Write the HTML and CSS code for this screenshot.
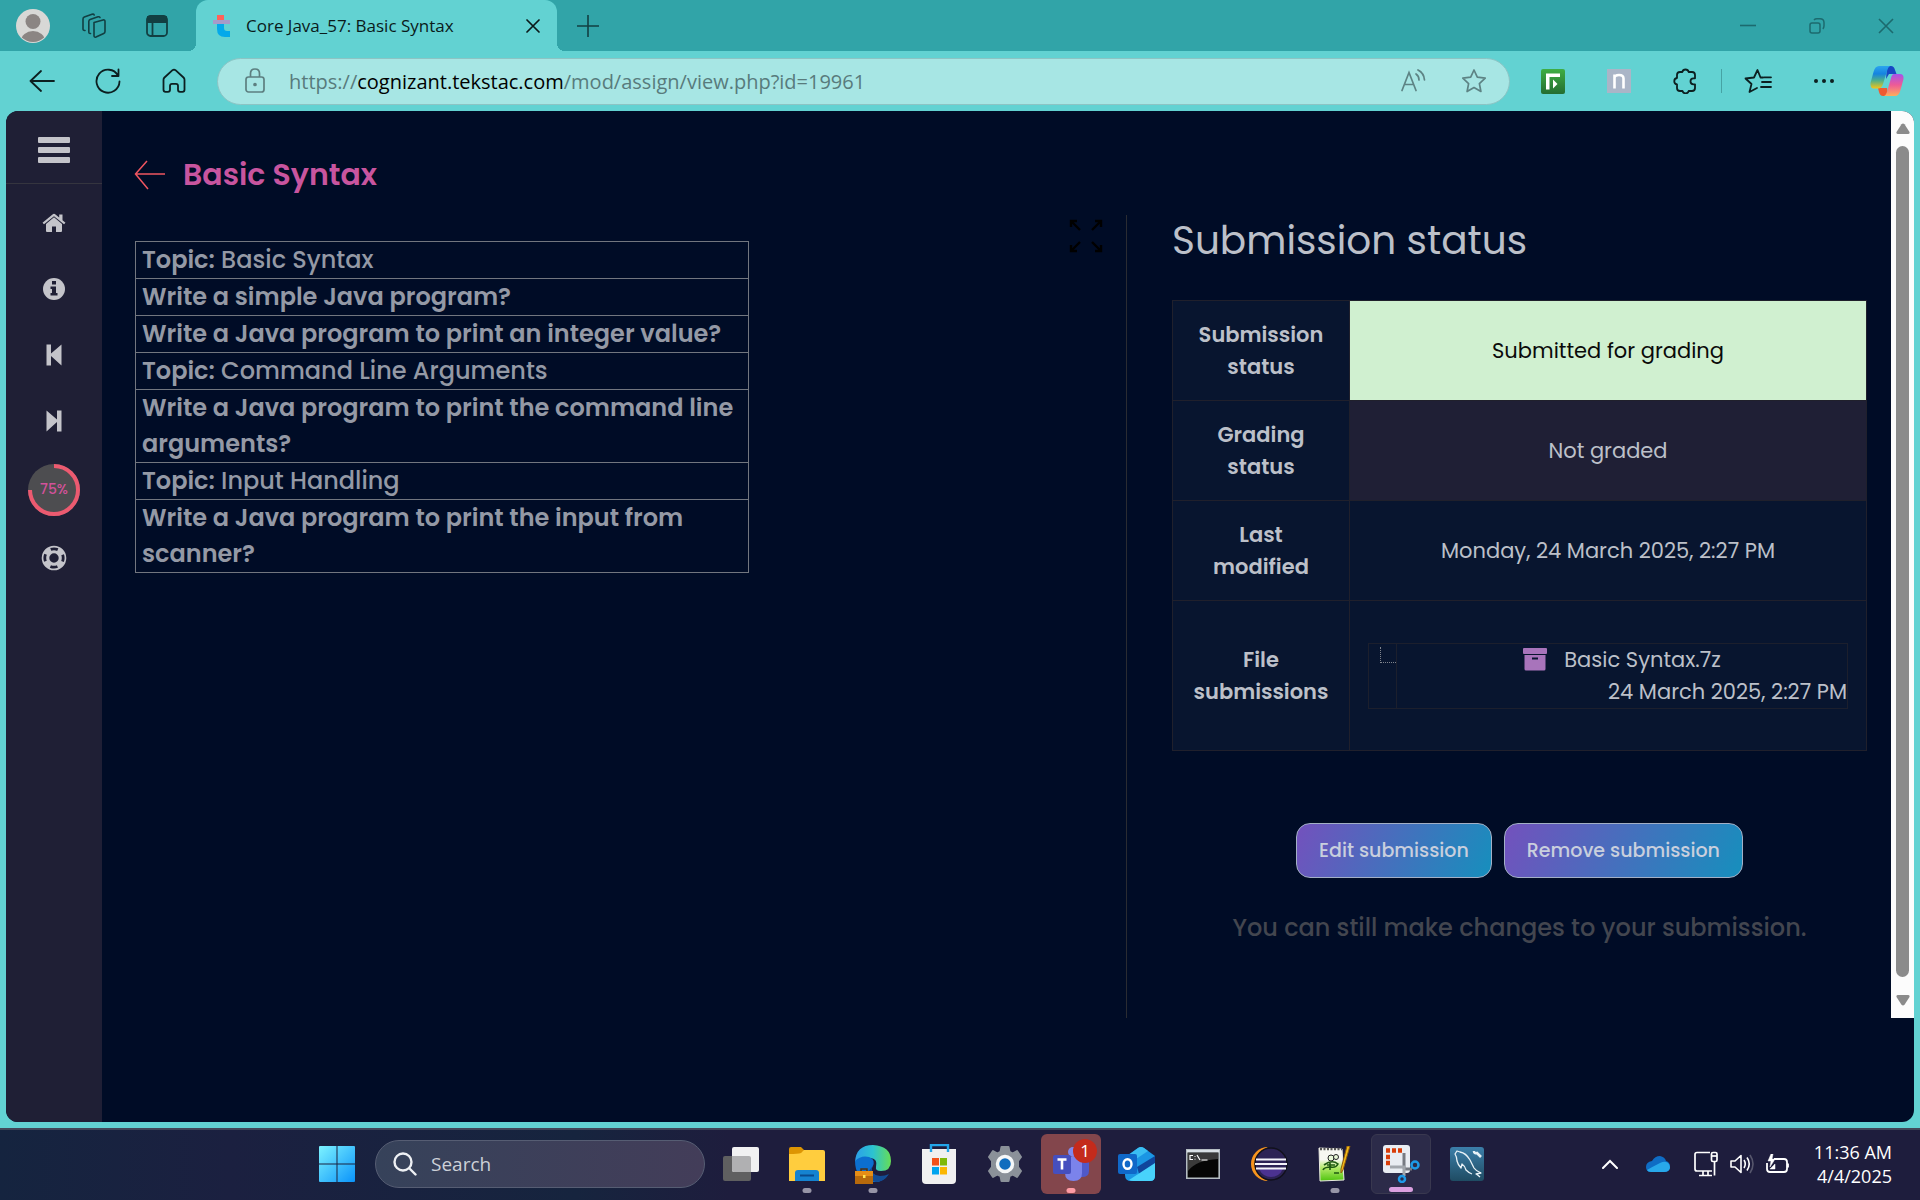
FILE: index.html
```html
<!DOCTYPE html>
<html lang="en">
<head>
<meta charset="utf-8">
<title>Core Java_57: Basic Syntax</title>
<link rel="stylesheet" href="styles.css">
</head>
<body>
<header class="browser">
  <div class="tabstrip">
    <button class="strip-btn profile" aria-label="Profile"><svg width="34" height="34" viewBox="0 0 34 34"><defs><clipPath id="av"><circle cx="17" cy="17" r="16"/></clipPath></defs><circle cx="17" cy="17" r="17" fill="#d8d8d6"/><g clip-path="url(#av)" fill="#8b8583"><circle cx="17" cy="12.500" r="7.500"/><ellipse cx="17" cy="32" rx="12" ry="10"/></g></svg></button>
    <button class="strip-btn" aria-label="Workspaces"><svg width="26" height="26" viewBox="0 0 26 26" fill="none" stroke="#123f42" stroke-width="1.600" stroke-linejoin="round" stroke-linecap="round"><path d="M13 9.500 22 7q2-.5 2 1.500v10q0 1.500-1.300 2L15 24q-2 .7-2-1.500z"/><path d="M9.500 20.500q-1.700.3-1.700-1.500V8.500q0-1.500 1.300-2L17 3.800q1.500-.4 2 .7M4 17.500q-2 .2-2-1.600V6q0-1.500 1.300-2L11 1.300q1.700-.5 2.200.7"/></svg></button>
    <button class="strip-btn" aria-label="Tab actions"><svg width="24" height="24" viewBox="0 0 24 24" fill="none" stroke="#123f42" stroke-width="1.800"><rect x="2" y="2" width="20" height="20" rx="3.500"/><path d="M2 8h20M7.500 8v14"/><path d="M3 3h18v4.500H3z" fill="#123f42"/></svg></button>
    <div class="tab">
      <svg width="18" height="22" viewBox="0 0 18 22"><path d="M4 0h7v5H4z" fill="#ff6259"/><path d="M4 9h7v4q0 3 3 3h3v6h-5q-8 0-8-8z" fill="#04a9ea"/><path d="M0 5h17v4H0z" fill="#a79bc9"/></svg>
      <span class="tab-title">Core Java_57: Basic Syntax</span>
      <button class="tab-close" aria-label="Close tab"><svg width="14" height="14" viewBox="0 0 14 14" stroke="#0a1a1a" stroke-width="1.700" stroke-linecap="round"><path d="m1 1 12 12M13 1 1 13"/></svg></button>
    </div>
    <button class="new-tab" aria-label="New tab"><svg width="22" height="22" viewBox="0 0 22 22" stroke="#123f42" stroke-width="1.600"><path d="M11 0v22M0 11h22"/></svg></button>
    <div class="window-controls">
      <button aria-label="Minimize"><svg width="16" height="16" viewBox="0 0 16 16" stroke="#1c6a6e" stroke-width="1.600"><path d="M0 7.500h16"/></svg></button>
      <button aria-label="Restore"><svg width="16" height="16" viewBox="0 0 16 16" fill="none" stroke="#1c6a6e" stroke-width="1.500"><rect x="1" y="5" width="10" height="10" rx="2"/><path d="M5 2q1-1.200 3-1.200h3q4 0 4 4v3q0 2-1.200 3"/></svg></button>
      <button aria-label="Close"><svg width="16" height="16" viewBox="0 0 16 16" stroke="#1c6a6e" stroke-width="1.600"><path d="m1 1 14 14M15 1 1 15"/></svg></button>
    </div>
  </div>
  <div class="toolbar">
    <button class="tool" aria-label="Back"><svg width="26" height="22" viewBox="0 0 26 22" fill="none" stroke="#0c1f20" stroke-width="1.800" stroke-linecap="round" stroke-linejoin="round"><path d="M12 1 1.500 11 12 21M1.500 11H25"/></svg></button>
    <button class="tool" aria-label="Refresh"><svg width="26" height="26" viewBox="0 0 26 26" fill="none" stroke="#0c1f20" stroke-width="1.800" stroke-linecap="round" stroke-linejoin="round"><path d="M24.500 13.500A11.500 11.500 0 1 1 23 7.500M23.500 1.500v6.500h-6.500"/></svg></button>
    <button class="tool" aria-label="Home"><svg width="24" height="26" viewBox="0 0 24 26" fill="none" stroke="#0c1f20" stroke-width="1.800" stroke-linejoin="round"><path d="M10.500 2.200q1.500-1.200 3 0l8 7.300q1 1 1 2.300v10q0 2-2 2h-2.500q-2 0-2-2v-4q0-2-2-2h-4q-2 0-2 2v4q0 2-2 2H3.500q-2 0-2-2v-10q0-1.300 1-2.300z"/></svg></button>
    <div class="address">
      <svg class="lock" width="20" height="26" viewBox="0 0 20 26" fill="none" stroke="#5d7f80" stroke-width="1.700"><rect x="1" y="9" width="18" height="15" rx="2.500"/><path d="M5.500 9V5.500q0-4.500 4.500-4.500t4.500 4.500V9"/><circle cx="10" cy="16.500" r="1" fill="#5d7f80"/></svg>
      <div class="url" role="textbox" aria-label="Address">https://<span class="host">cognizant.tekstac.com</span>/mod/assign/view.php?id=19961</div>
      <button class="in-bar" aria-label="Read aloud"><svg width="26" height="24" viewBox="0 0 26 24" fill="none" stroke="#5d8384" stroke-width="1.700" stroke-linecap="round"><path d="m1 21.500 7-18 7 18M3.500 15.500h9M15 5q3 2 3 6M17 1q6 3 6.500 10"/></svg></button>
      <button class="in-bar" aria-label="Add to favorites"><svg width="26" height="26" viewBox="0 0 26 26" fill="none" stroke="#5d8384" stroke-width="1.700" stroke-linejoin="round"><path d="m13 2 3.300 7.200 7.900 1-5.800 5.400 1.500 7.900-6.900-3.900-6.900 3.900 1.500-7.900-5.800-5.400 7.900-1z"/></svg></button>
    </div>
    <button class="tool" aria-label="Form extension"><svg width="24" height="25" viewBox="0 0 24 25"><defs><linearGradient id="gr" x2="0" y2="1"><stop stop-color="#3fae45"/><stop offset="1" stop-color="#246d31"/></linearGradient></defs><rect width="24" height="25" rx="2" fill="url(#gr)"/><path d="M5 4.500h14V8H8.500v12.500H5z" fill="#fff"/><path d="m12 10.500 4.500 4.500-4.500 4.500z" fill="#fff"/></svg></button>
    <button class="tool" aria-label="n extension"><svg width="24" height="24" viewBox="0 0 24 24"><path d="M0 0h24v24H0z" fill="#aab5c7"/><path d="M7.500 19.500V5.500M7.500 9q0-3 4.500-3t4.500 3.500v10" fill="none" stroke="#fff" stroke-width="2.600"/></svg></button>
    <button class="tool" aria-label="Extensions"><svg width="24" height="26" viewBox="0 0 24 26" fill="none" stroke="#0c1f20" stroke-width="1.800" stroke-linejoin="round"><path d="M9.300 4a3.300 3.300 0 0 1 6.400 0H19q3 0 3 3v3.300h-1.500a3 3 0 0 0 0 6H22V20q0 3-3 3h-3.300a3.200 3.200 0 0 1-6.200 0H7q-3 0-3-3v-3.500a3.300 3.300 0 0 1 0-6.500V7q0-3 3-3z"/></svg></button>
    <span class="divider"></span>
    <button class="tool" aria-label="Favorites"><svg width="28" height="26" viewBox="0 0 28 26" fill="none" stroke="#0c1f20" stroke-width="1.800" stroke-linejoin="round" stroke-linecap="round"><path d="M19 9.500h-2.500L13.500 2l-3.500 7.500-8.500 1 6 5.500-2 8 7.500-4M18 14h9M17 19h10M20 9.300h7"/></svg></button>
    <button class="tool" aria-label="Settings and more"><svg width="22" height="6" viewBox="0 0 22 6" fill="#0c1f20"><circle cx="3" cy="3" r="2"/><circle cx="11" cy="3" r="2"/><circle cx="19" cy="3" r="2"/></svg></button>
    <button class="tool copilot" aria-label="Copilot"><svg width="34" height="32" viewBox="0 0 34 32"><defs><linearGradient id="c1" x2="0" y2="1"><stop stop-color="#2ba5ee"/><stop offset=".35" stop-color="#1583e0"/><stop offset=".65" stop-color="#4fb08a"/><stop offset="1" stop-color="#f6c516"/></linearGradient><linearGradient id="c2" x2="0" y2="1"><stop stop-color="#a553ea"/><stop offset=".5" stop-color="#ee5b96"/><stop offset="1" stop-color="#ffae5c"/></linearGradient></defs><path d="M17 1h4q3 0 4 4l1.500 4H19l-3 5z" fill="#1748c4"/><path d="M8 23h9l1 8h-5q-3 0-4-4z" fill="#ef5a32"/><path d="M9 1h11q-2 1-3 5l-4 13q-1.500 4.500-5 4.500H4Q0 23.500.5 18L3.500 7Q5 1 9 1z" fill="url(#c1)"/><path d="M24 9h6q4 0 3.500 5l-3 11q-1.500 6-5.500 6H14q2-1 3-4l4-14q1-4 3-4z" fill="url(#c2)"/></svg></button>
  </div>
</header>

<div class="frame">
  <div class="viewport">
    <nav class="sidebar" aria-label="Course">
      <div class="menu-row"><button aria-label="Menu"><svg width="32" height="26" viewBox="0 0 32 26" fill="#c4c4ca"><rect width="32" height="6" rx="1"/><rect y="10" width="32" height="6" rx="1"/><rect y="20" width="32" height="6" rx="1"/></svg></button></div>
      <a href="#home" aria-label="Home"><svg width="24" height="20" viewBox="0 0 24 20" fill="#c4c4ca"><path d="M12 4.200 20 11v7q0 1-1 1h-5v-5.500h-4V19H5q-1 0-1-1v-7z"/><path d="M12 .8q-.8 0-1.500.6L.5 9.800 2 11.300 12 3.200l10 8.100 1.500-1.500-3-2.600V1.500h-3.300v3L13.500 1.400Q12.800.8 12 .8z"/></svg></a>
      <a href="#info" aria-label="Information"><svg width="22" height="22" viewBox="0 0 22 22"><circle cx="11" cy="11" r="11" fill="#c4c4ca"/><path d="M9 3h4v3.500H9zM7.500 8.500H13V15h1.500v2.500h-7V15H9v-4H7.500z" fill="#1f1f35"/></svg></a>
      <a href="#previous" aria-label="Previous"><svg width="16" height="22" viewBox="0 0 16 22" fill="#c4c4ca"><path d="M.5.500h4.500v9L15.500.5v21L5 12v9.500H.5z"/></svg></a>
      <a href="#next" aria-label="Next"><svg width="16" height="22" viewBox="0 0 16 22" fill="#c4c4ca"><path d="M15.500.500H11v9L.5.500v21L11 12v9.500h4.500z"/></svg></a>
      <div class="progress"><svg width="52" height="52" viewBox="0 0 52 52"><circle cx="26" cy="26" r="26" fill="#4d4d50"/><path d="M26 2a24 24 0 1 1-24 24" fill="none" stroke="#ec5a70" stroke-width="4"/></svg><span>75%</span></div>
      <a href="#help" aria-label="Help"><svg width="26" height="26" viewBox="0 0 26 26" fill="none"><circle cx="13" cy="13" r="8.500" stroke="#c4c4ca" stroke-width="7.600"/><circle cx="13" cy="13" r="9.200" stroke="#1f1f35" stroke-width="2.800" stroke-dasharray="7.200 7.250" stroke-dashoffset="3.600"/></svg></a>
    </nav>
    <main class="content">
      <div class="page-head">
        <a href="#back" aria-label="Back to course"><svg width="31" height="30" viewBox="0 0 31 30" fill="none" stroke="#ee5560" stroke-width="1.500"><path d="M13 1 1.500 14 14 29M1 14h30"/></svg></a>
        <h1>Basic Syntax</h1>
      </div>
      <div class="panes">
        <section class="task">
          <table class="topics">
            <tr><td><b>Topic:</b> Basic Syntax</td></tr>
            <tr><td><b>Write a simple Java program?</b></td></tr>
            <tr><td><b>Write a Java program to print an integer value?</b></td></tr>
            <tr><td><b>Topic:</b> Command Line Arguments</td></tr>
            <tr><td><b>Write a Java program to print the command line<br>arguments?</b></td></tr>
            <tr><td><b>Topic:</b> Input Handling</td></tr>
            <tr><td><b>Write a Java program to print the input from<br>scanner?</b></td></tr>
          </table>
          <button class="expand" aria-label="Full screen"><svg width="34" height="34" viewBox="0 0 34 34" fill="none" stroke="#000" stroke-width="2.400"><path d="M2 8V2h6M2 2l9 9M26 2h6v6M32 2l-9 9M2 26v6h6M2 32l9-9M26 32h6v-6M32 32l-9-9"/></svg></button>
        </section>
        <section class="submission">
          <h2>Submission status</h2>
          <table class="status">
            <tr><th scope="row">Submission<br>status</th><td class="submitted">Submitted for grading</td></tr>
            <tr><th scope="row">Grading<br>status</th><td class="ungraded">Not graded</td></tr>
            <tr><th scope="row">Last<br>modified</th><td>Monday, 24 March 2025, 2:27 PM</td></tr>
            <tr class="files"><th scope="row">File<br>submissions</th><td>
              <div class="file-tree">
                <span class="branch"></span>
                <div class="file">
                  <a href="#file"><svg width="24" height="23" viewBox="0 0 24 23"><rect width="24" height="6" rx="1" fill="#a874bb"/><path d="M1.500 7h21v14q0 1.500-1.500 1.500H3q-1.500 0-1.500-1.500z" fill="#a874bb"/><path d="M9 9.500h6v2H9z" fill="#0a1630"/></svg>Basic Syntax.7z</a>
                  <span class="file-date">24 March 2025, 2:27 PM</span>
                </div>
              </div>
            </td></tr>
          </table>
          <div class="actions">
            <button>Edit submission</button>
            <button>Remove submission</button>
          </div>
          <p class="note">You can still make changes to your submission.</p>
        </section>
      </div>
    </main>
    <div class="scrollbar">
      <svg width="14" height="11" viewBox="0 0 14 11" fill="#8b8b8b"><path d="M5.500 1.200q1.500-1.500 3 0l5 7.800q.5 2-1.500 2H2Q0 11 .5 9z"/></svg>
      <span class="thumb"></span>
      <svg width="14" height="11" viewBox="0 0 14 11" fill="#8b8b8b"><path d="M5.500 9.800q1.500 1.500 3 0l5-7.800q.5-2-1.500-2H2Q0 0 .5 2z"/></svg>
    </div>
  </div>
</div>

<footer class="taskbar">
  <div class="apps">
    <button class="app" aria-label="Start"><svg width="36" height="36" viewBox="0 0 36 36"><defs><linearGradient id="w" x2="1" y2="1"><stop stop-color="#7df3ff"/><stop offset="1" stop-color="#0a93fa"/></linearGradient></defs><path d="M1 0h16.500v17.500H0V1q0-1 1-1zM18.500 0H35q1 0 1 1v16.500H18.500zM0 18.500h17.500V36H1q-1 0-1-1zM18.500 18.500H36V35q0 1-1 1H18.500z" fill="url(#w)"/></svg></button>
    <label class="search"><svg width="24" height="24" viewBox="0 0 24 24" fill="none" stroke="#eef0f4" stroke-width="2.400" stroke-linecap="round"><circle cx="10" cy="10" r="8.500"/><path d="m16.500 16.500 6 6"/></svg><input type="text" placeholder="Search" aria-label="Search"></label>
    <button class="app" aria-label="Task view"><svg width="38" height="36" viewBox="0 0 38 36"><rect x="1" y="10" width="28" height="25" rx="2" fill="#5f5f60"/><rect x="10" y="1" width="27" height="25" rx="2" fill="#f1f1f2"/><path d="M10 10h17q2 0 2 2v14H12q-2 0-2-2z" fill="#b0b0b2"/></svg></button>
    <button class="app running" aria-label="File Explorer"><svg width="36" height="36" viewBox="0 0 36 36"><path d="M0 3q0-2 2-2h10l4 4v8H0z" fill="#dd9503"/><path d="M0 8q9 0 12-1l3-3h19q2 0 2 2v29H0z" fill="#ffcd3e"/><path d="M6 35V27q0-3 3-3h18q3 0 3 3v8z" fill="#1583d0"/><path d="M11 29.500h14" stroke="#0a4a8c" stroke-width="2"/></svg></button>
    <button class="app running" aria-label="Edge"><svg width="38" height="40" viewBox="0 0 38 40"><defs><linearGradient id="e" x2="1"><stop stop-color="#2b9fea"/><stop offset=".5" stop-color="#2cc3d0"/><stop offset="1" stop-color="#67dd55"/></linearGradient></defs><path d="M1 18Q2 1 19 1q18 1 18 16 0 10-10 10-6 0-5-4 2-8-5-9Q7 13 1 18z" fill="url(#e)"/><path d="M1 17q6-6 14-4 8 3 3 11-2 7 8 9 5 0 8-2-6 8-15 7Q1 36 1 17z" fill="#0c6fd0"/><path d="M18 23q-2 8 8 9 5 0 9-2-5 8-13 8-8-2-8-10z" fill="#124c94"/><path d="M1 27h18v13H1z" fill="#b6690c"/><path d="M1 27h18v5H1z" fill="#e58d16"/><path d="M7 27v-2h6v2" fill="none" stroke="#4d3010" stroke-width="1.500"/><path d="M9 31h2.500v3H9z" fill="#ffe44d"/></svg></button>
    <button class="app" aria-label="Microsoft Store"><svg width="34" height="40" viewBox="0 0 34 40"><path d="M0 5h34v31q0 4-4 4H4q-4 0-4-4z" fill="#f0f0f0"/><path d="M9 8V1h17v7" fill="none" stroke="#23a6ea" stroke-width="2.400"/><path d="M10 14h7v7.500h-7z" fill="#f1511b"/><path d="M18 14h7v7.500h-7z" fill="#80b908"/><path d="M10 23h7v7.500h-7z" fill="#00a4ef"/><path d="M18 23h7v7.500h-7z" fill="#fbb702"/></svg></button>
    <button class="app" aria-label="Settings"><svg width="36" height="36" viewBox="0 0 36 36"><path d="M14.500 1h7l1 5 3 1.500L30 5l4 6-3 4v6l3 4-4 6-4.500-2.500-3 1.500-1 5h-7l-1-5-3-1.500L6 31l-4-6 3-4v-6l-3-4 4-6 4.500 2.500 3-1.500z" fill="#8b9199" stroke="#8b9199" stroke-linejoin="round" stroke-width="2"/><circle cx="18" cy="18" r="7.500" fill="#0f6cbe" stroke="#f5f7f8" stroke-width="3.500"/></svg></button>
    <button class="app teams running" aria-label="Teams"><svg width="36" height="36" viewBox="0 0 36 36"><circle cx="20" cy="6" r="5" fill="#7f89ee"/><path d="M22 12h14v13q0 6-7 6h-5z" fill="#5059c9"/><path d="M12 11h17v16q0 8-8.500 8T12 27z" fill="#7b83eb"/><rect y="9" width="18" height="19" rx="2" fill="#454fbf"/><path d="M4.500 13.500h9M9 13.500v10" stroke="#fff" stroke-width="2.600"/></svg><span class="badge">1</span></button>
    <button class="app" aria-label="Outlook"><svg width="38" height="38" viewBox="0 0 38 38"><path d="M7 12 20 3q3-2 6 0l11 8v20q0 5-5 5H13q-6 0-6-6z" fill="#1b96e4"/><path d="m19 22 18-11v11L22 32z" fill="#10469c"/><path d="m12 9 8-6q3-2 6 0l4 3-15 10z" fill="#3abef2"/><path d="m11 35 26-17v13q0 5-5 5H15q-2 0-4-1z" fill="#48d2fb"/><rect y="9" width="19" height="20" rx="2" fill="#1068c8"/><ellipse cx="9.500" cy="19" rx="4" ry="4.800" fill="none" stroke="#fff" stroke-width="2.400"/></svg></button>
    <button class="app" aria-label="Command Prompt"><svg width="34" height="30" viewBox="0 0 34 30"><path d="M.8.800h32.400v28.400H.8z" fill="#050505" stroke="#b4bcc2" stroke-width="1.600"/><path d="M2 4h30v6Q10 11 2 22z" fill="#3a3a3a"/><path d="M1 1h32v2.500H1z" fill="#d9e0e5"/><path d="M7 6.500H4v4h3M9 7v.8M9 9.800v.8M11 6l3 5M15.500 11h6" stroke="#fff" fill="none" stroke-width="1.200"/></svg></button>
    <button class="app" aria-label="Eclipse"><svg width="38" height="36" viewBox="0 0 38 36"><path d="M18 1A17 17 0 0 0 18 35Q5 29 5 18T18 1z" fill="#f7941e"/><circle cx="21" cy="18" r="16" fill="#2c2255" stroke="#11111c" stroke-width="1.500"/><path d="M9 23h24q-4 8-12 8T9 23z" fill="#4b3290"/><path d="M6 13.500h30M5 18h32M6 22.500h30" stroke="#f4f3fa" stroke-width="2.200"/></svg></button>
    <button class="app running" aria-label="Notepad++"><svg width="34" height="36" viewBox="0 0 34 36"><defs><linearGradient id="np" x2="0" y2="1"><stop offset=".35" stop-color="#f7f7f1"/><stop offset=".6" stop-color="#b4ea6a"/><stop offset="1" stop-color="#4fc40e"/></linearGradient></defs><path d="m1 2 23 1 2 31-24 1z" fill="url(#np)" stroke="#e8e8e0"/><path d="M2 3h22" stroke="#555" stroke-width="2.500" stroke-dasharray="2 1.500"/><circle cx="13" cy="12" r="3" fill="#e9f8d8" stroke="#222"/><circle cx="18" cy="11" r="2.500" fill="#e9f8d8" stroke="#222"/><path d="M6 19q8-6 14-1-2 4-7 3-7 0-8 3m4-5h8m-5-2v7m4 3h5" fill="none" stroke="#1f5a12" stroke-width="1.600"/><path d="m32 0-7 24-2 3v-4L29 0z" fill="#f3ba17" stroke="#8c5a10"/></svg></button>
    <button class="app active" aria-label="Snipping Tool"><svg width="38" height="38" viewBox="0 0 38 38"><rect x="1" y="0" width="27" height="28" rx="3" fill="#e9edf2"/><path d="M4 5.500h4m2 0h4m2 0h4M4 12h4M4 18h4" stroke="#d93d08" stroke-width="4.500"/><path d="M22 8v14q0 2 2 2h6" fill="none" stroke="#777b82" stroke-width="3"/><path d="M8 22h14v9" fill="none" stroke="#a2a7ad" stroke-width="3"/><circle cx="33" cy="20" r="3.500" fill="none" stroke="#1d9ae8" stroke-width="2.500"/><circle cx="20" cy="34" r="3" fill="none" stroke="#1d9ae8" stroke-width="2.500"/></svg></button>
    <button class="app" aria-label="MySQL Workbench"><svg width="34" height="34" viewBox="0 0 34 34"><defs><linearGradient id="m" x2="0" y2="1"><stop stop-color="#3c7fa9"/><stop offset="1" stop-color="#1f4c63"/></linearGradient></defs><rect width="34" height="34" rx="3" fill="url(#m)"/><path d="M30 30q-2-2-4-3l5-1q-5-2-7-5-2-4-4-8-4-7-10-8L7 4 5 7q2 3 2 7 1 4 4 7l1-4q3 2 4 6 3 3 6 4" fill="none" stroke="#e8f1f6" stroke-width="1.300" stroke-linejoin="round"/><path d="M24 4q0 3 3 2l4 4" fill="none" stroke="#e8f1f6" stroke-width="2.600"/></svg></button>
  </div>
  <div class="tray">
    <button class="chevron" aria-label="Hidden icons"><svg width="16" height="10" viewBox="0 0 16 10" fill="none" stroke="#fff" stroke-width="2" stroke-linecap="round"><path d="m1 9 7-7 7 7"/></svg></button>
    <button class="cloud" aria-label="OneDrive"><svg width="24" height="16" viewBox="0 0 24 16"><path d="M6 5q3-5 8-5 5 1 6 5 4 1 4 5.500Q24 16 18 16H5q-5 0-5-5 0-5 6-6z" fill="#0f6cc4"/><path d="M1 14q5-3 13-7 6-3 9 1 1 2 1 4-1 4-6 4H5q-3 0-4-2z" fill="#28a8ea"/></svg></button>
    <button class="net" aria-label="Network, volume and power">
      <svg width="24" height="26" viewBox="0 0 24 26" fill="none" stroke="#fff" stroke-width="1.700"><path d="M16 1.500H3q-2 0-2 2V18q0 2 2 2h15M9 20v4M14 20v4M5 24.500h13M20.500 11v13.500"/><rect x="17.500" y="1.500" width="5.500" height="9" rx="1.500"/><path d="M17.500 5h5.500"/></svg>
      <svg width="24" height="22" viewBox="0 0 24 22" fill="none" stroke="#fff" stroke-width="1.600" stroke-linejoin="round"><path d="M1 8h4l6-5.500v17L5 14H1zM14 7q2.500 4 0 8M17 4.500q4.500 6.500 0 13"/><path d="M20 2q6 9 0 18" stroke="#56566c"/></svg>
      <svg width="24" height="20" viewBox="0 0 24 20" fill="none" stroke="#fff" stroke-width="1.800"><path d="M8 5h10q3 0 3 3v7q0 3-3 3H4q-3 0-3-3V9M22 9.500v4"/><path d="M5 0 2 7h3l-1 6 5-8H6l1-5zM4 15l5-5v5z" fill="#fff" stroke-width=".5"/></svg>
    </button>
    <div class="clock"><span>11:36 AM</span><span>4/4/2025</span></div>
  </div>
</footer>
</body>
</html>
```
FILE: styles.css
```css
* { box-sizing: border-box; }
body {
  margin: 0;
  min-height: 100vh;
  display: flex;
  flex-direction: column;
  background: #62d2d2;
  font-family: "Segoe UI", "Open Sans", "Noto Sans", sans-serif;
}
button { border: 0; padding: 0; background: none; font: inherit; color: inherit; }
svg { display: block; flex: none; }
a { color: inherit; text-decoration: none; }

/* Browser chrome */
.tabstrip { display: flex; height: 51px; background: #31a4a8; }
.strip-btn { width: 63px; display: grid; place-items: center; }
.profile { width: 62px; padding-left: 4px; }
.tab {
  position: relative;
  width: 361px;
  margin-left: 8px;
  padding: 0 17px;
  display: flex;
  align-items: center;
  gap: 15px;
  background: #62d2d2;
  border-radius: 12px 12px 0 0;
  font-size: 17px;
  color: #0a1a1a;
}
/* Outward curves where the tab meets the toolbar */
.tab::before, .tab::after { content: ""; position: absolute; bottom: 0; width: 8px; height: 8px; }
.tab::before { right: 100%; background: radial-gradient(circle at 0 0, #31a4a8 8px, #62d2d2 8px); }
.tab::after { left: 100%; background: radial-gradient(circle at 100% 0, #31a4a8 8px, #62d2d2 8px); }
.tab-title { flex: 1; white-space: nowrap; }
.new-tab { width: 62px; display: grid; place-items: center; }
.window-controls { margin-left: auto; display: flex; }
.window-controls button { width: 69px; display: grid; place-items: center; }

.toolbar { display: flex; align-items: center; height: 60px; padding: 0 3px 0 9px; }
.tool { width: 66px; height: 48px; display: grid; place-items: center; }
.copilot { width: 60px; }
.divider { width: 1px; height: 24px; margin: 0 3px; background: #46a3a4; }
.address {
  flex: 1;
  height: 47px;
  margin: 0 10px;
  padding: 0 5px 0 27px;
  display: flex;
  align-items: center;
  background: #a7e6e4;
  border: 1px solid #8cc4c4;
  border-radius: 24px;
}
.url { flex: 1; margin-left: 24px; font-size: 20px; color: #587b7c; white-space: nowrap; }
.host { color: #000; }
.in-bar { width: 60px; height: 40px; display: grid; place-items: center; }

/* Page */
.frame { flex: 1; display: flex; padding: 0 6px 6px; }
.viewport {
  flex: 1;
  display: flex;
  overflow: hidden;
  background: #000c26;
  border-radius: 12px;
  font-family: Poppins, Inter, "Open Sans", sans-serif;
  color: #bcc0c9;
}
.sidebar { width: 96px; background: #1f1f35; display: flex; flex-direction: column; }
.sidebar a, .progress { height: 66px; display: grid; place-items: center; }
.menu-row { height: 73px; margin-bottom: 6px; padding-top: 6px; border-bottom: 1px solid #35353f; display: grid; place-items: center; }
.progress { height: 71px; font-size: 14px; font-weight: 500; color: #d2529a; }
.progress > * { grid-area: 1 / 1; }

.content { flex: 1; display: flex; flex-direction: column; margin-bottom: 104px; }
.page-head { display: flex; align-items: center; gap: 18px; height: 104px; padding: 24px 32px 0; }
h1 { margin: 0; font-size: 30px; font-weight: 600; color: #c8559f; }
.panes { flex: 1; display: grid; grid-template-columns: 1025fr 764fr; }
.task { display: flex; align-items: flex-start; justify-content: space-between; padding: 26px 23px 0 33px; border-right: 1px solid #2a2c32; }
.topics { width: 614px; border-collapse: collapse; font-size: 24px; line-height: 36px; font-weight: 500; color: #9499a5; }
.topics td { padding: 0 6px; border: 1px solid #72767f; white-space: nowrap; }
.topics b { font-weight: 600; }
.expand { margin-top: -22px; }

.submission { padding: 0 24px 0 45px; }
h2 { margin: 0 0 33px; font-size: 39px; line-height: 52px; font-weight: 400; }
.status {
  width: 100%;
  table-layout: fixed;
  border-collapse: collapse;
  background: #08152f;
  font-size: 21px;
  line-height: 32px;
  text-align: center;
}
.status th, .status td { height: 100px; padding: 0 18px; border: 1px solid #20202c; }
.status th { width: 177px; padding: 0; font-weight: 600; }
.status .submitted { background: #d0f0d0; color: #0a0a0a; }
.status .ungraded { background: #1f1f35; }
.status .files > * { height: 150px; }
.file-tree { display: flex; border: 1px solid #1c1f2d; }
.branch { width: 16px; height: 16px; margin: 3px 0 0 11px; border: dotted #80848d; border-width: 0 0 1px 1px; }
.file { flex: 1; display: flex; flex-direction: column; border-left: 1px solid #1c1f2d; }
.file a { display: flex; justify-content: center; align-items: center; gap: 17px; }
.file-date { text-align: right; }
.actions { display: flex; justify-content: center; gap: 12px; margin-top: 72px; }
.actions button {
  height: 55px;
  padding: 0 22px;
  border: 1px solid #a3b0c6;
  border-radius: 14px;
  background: linear-gradient(115deg, #7351bd, #168fbd);
  font-size: 19px;
  font-weight: 500;
  color: #c9cfdd;
}
.note { margin: 32px 0 0; font-size: 24px; line-height: 36px; font-weight: 500; text-align: center; color: #43464f; }

.scrollbar {
  width: 23px;
  margin-bottom: 104px;
  padding: 12px 0;
  display: flex;
  flex-direction: column;
  align-items: center;
  gap: 12px;
  background: #fcfcfc;
}
.thumb { flex: 1; width: 13px; margin-bottom: 6px; border-radius: 7px; background: #8b8b8b; }

/* Taskbar */
.taskbar {
  height: 72px;
  padding-bottom: 2px;
  display: flex;
  justify-content: flex-end;
  border-top: 2px solid #424759;
  background: linear-gradient(90deg, #15243f, #1b2040 12%, #16243e 30%, #1e1d3d 38%, #1e1d3d);
  color: #fff;
}
.apps { display: flex; align-items: center; }
.app { position: relative; width: 60px; height: 60px; margin: 0 3px; border-radius: 6px; display: grid; place-items: center; }
.search {
  width: 330px;
  height: 48px;
  margin: 0 3px 0 5px;
  padding: 0 17px;
  display: flex;
  align-items: center;
  gap: 14px;
  border: 1px solid #565d73;
  border-radius: 24px;
  background: linear-gradient(90deg, #36425a, #433d59);
}
.search input { flex: 1; min-width: 0; border: 0; padding: 0; background: none; font: inherit; font-size: 19px; color: #fff; }
.search input::placeholder { color: #cdd1d8; opacity: 1; }
.running::after, .active::after {
  content: "";
  position: absolute;
  left: 50%;
  bottom: 1px;
  width: 9px;
  height: 5px;
  border-radius: 3px;
  background: #9795a7;
  transform: translateX(-50%);
}
.teams { background: #83464c; }
.teams::after { background: #ff9ba4; }
.active { background: #2c2b49; border: 1px solid #39384f; }
.active::after { width: 24px; background: #dba0e0; }
.badge {
  position: absolute;
  top: 5px;
  right: 4px;
  width: 24px;
  height: 24px;
  border-radius: 50%;
  background: #c42b1c;
  font-size: 17px;
  line-height: 24px;
}
.tray { width: 420px; display: flex; align-items: center; padding-right: 28px; }
.chevron { margin-left: 102px; }
.cloud { margin-left: 28px; }
.net { display: flex; align-items: center; gap: 12px; margin-left: 24px; }
.clock { margin-left: auto; display: flex; flex-direction: column; text-align: right; font-size: 18px; line-height: 24px; }
```
